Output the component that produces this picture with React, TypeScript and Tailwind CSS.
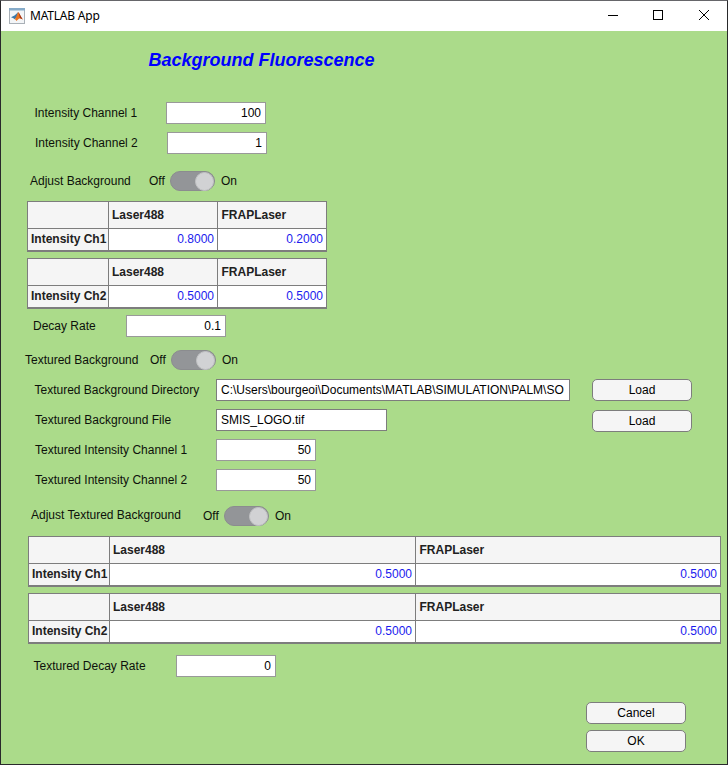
import React from "react";

function Label({ text, className }: { text: string; className: string }) {
  return <span className={`shrink-0 whitespace-nowrap leading-[14px] ${className}`}>{text}</span>;
}

function NumberField({ value, className = "" }: { value: string; className?: string }) {
  return (
    <div className={`flex h-[22px] w-[100px] shrink-0 items-center justify-end border border-[#999999] bg-white pr-1 text-black ${className}`}>
      {value}
    </div>
  );
}

function TextField({ value, className }: { value: string; className: string }) {
  return (
    <div className={`flex h-[22px] shrink-0 items-center border border-[#7d7d7d] bg-white px-1 text-black ${className}`}>
      <span className="whitespace-nowrap">{value}</span>
    </div>
  );
}

function Button({ text, className = "" }: { text: string; className?: string }) {
  return (
    <button className={`flex h-[22px] w-[100px] shrink-0 items-center justify-center rounded-[5px] border border-[#7d7d7d] bg-[#f5f5f5] text-black ${className}`}>
      {text}
    </button>
  );
}

function Switch() {
  return (
    <div className="flex h-5 shrink-0 items-center">
      <span className="w-[21px]">Off</span>
      <div className="flex h-5 w-[45px] items-center justify-end rounded-full border border-[#8b8c8f] bg-[#939598]">
        <div className="size-[19px] rounded-full border border-[#c1c2c4] bg-[#d1d2d4]" />
      </div>
      <span className="pl-[6px]">On</span>
    </div>
  );
}

function Table({ row, values, columns, className }: { row: string; values: string[]; columns: string; className: string }) {
  return (
    <div className={`grid h-[51px] shrink-0 grid-rows-[26px_21px] gap-px border border-b-2 border-[#7d7d7d] bg-[#7d7d7d] ${columns} ${className}`}>
      <div className="bg-[#f5f5f5]" />
      <div className="flex items-center bg-[#f5f5f5] pl-[3px] font-bold text-[#212121]">Laser488</div>
      <div className="flex items-center bg-[#f5f5f5] pl-[3.5px] font-bold text-[#212121]">FRAPLaser</div>
      <div className="flex items-center whitespace-nowrap bg-[#f5f5f5] pb-[2px] pl-[3px] font-bold text-[#212121]">{row}</div>
      <div className="flex items-center justify-end bg-white pr-[3px] pb-[2px] text-[#1a1aee]">{values[0]}</div>
      <div className="flex items-center justify-end bg-white pr-[3px] pb-[2px] text-[#1a1aee]">{values[1]}</div>
    </div>
  );
}

function MatlabIcon() {
  return (
    <svg width="16" height="16" viewBox="0 0 16 16" className="shrink-0">
      <rect x="0.5" y="0.5" width="15" height="15" fill="#f3f5f7" stroke="#a9b0b7" />
      <rect x="0" y="0" width="16" height="2.5" fill="#86abc9" />
      <path d="M2 9.3 5.5 7.6 8 5.3 9.2 4 8.3 8.4 5.6 11.2 4.4 10.3Z" fill="#3b79aa" />
      <path d="M5.6 11.2C7.5 10 8 5.8 9.2 4 10.7 5.4 12 9.2 13.8 11.4 12.2 10.6 11 10 9.8 10.8 8.7 11.6 8.2 12.7 7.4 13 7 12 6.3 11.4 5.6 11.2Z" fill="#ea7420" />
      <path d="M9.2 4C10.7 5.4 12 9.2 13.8 11.4 12.3 10.7 11.6 10.3 10.9 10.3 10.6 8 10.1 5.7 9.2 4Z" fill="#a03218" />
    </svg>
  );
}

function TitleBar() {
  return (
    <div className="flex h-[30px] shrink-0 items-center bg-white pl-2">
      <MatlabIcon />
      <span className="ml-[5px] grow font-['Noto_Sans',sans-serif] text-[12px] tracking-[-0.2px] text-black">MATLAB App</span>
      <svg width="120" height="30" viewBox="0 0 120 30" fill="none" stroke="#000" shapeRendering="crispEdges">
        <path d="M1 14.5H11" />
        <rect x="46.5" y="9.5" width="9" height="9" />
        <path d="M92 9 102 19M102 9 92 19" shapeRendering="auto" />
      </svg>
    </div>
  );
}

export default function App() {
  return (
    <div className="flex h-[765px] w-[728px] flex-col border border-[#29292b] border-t-[#66666a] bg-[#abdb8a] font-['Liberation_Sans',Arial,sans-serif] text-[12px] leading-[14px] text-[#0d110b]">
      <TitleBar />
      <h1 className="mt-[18px] ml-[147.5px] h-[22px] text-[18px] leading-[22px] font-bold whitespace-nowrap text-[#0000ff] italic">
        Background Fluorescence
      </h1>
      <div className="mt-[31px] flex h-[22px] items-center">
        <Label text="Intensity Channel 1" className="w-[165px] pl-[33.5px]" />
        <NumberField value="100" />
      </div>
      <div className="mt-2 flex h-[22px] items-center">
        <Label text="Intensity Channel 2" className="w-[166px] pl-[34px]" />
        <NumberField value="1" />
      </div>
      <div className="mt-[17px] flex h-5 items-center">
        <Label text="Adjust Background" className="w-[148px] pl-[29px]" />
        <Switch />
      </div>
      <Table row="Intensity Ch1" values={["0.8000", "0.2000"]} columns="grid-cols-[80px_108px_108px]" className="mt-[10px] ml-[26px] w-[300px]" />
      <Table row="Intensity Ch2" values={["0.5000", "0.5000"]} columns="grid-cols-[80px_108px_108px]" className="mt-[6px] ml-[26px] w-[300px]" />
      <div className="mt-[6px] flex h-[22px] items-center">
        <Label text="Decay Rate" className="w-[125px] pl-[32px]" />
        <NumberField value="0.1" />
      </div>
      <div className="mt-[13px] flex h-5 items-center">
        <Label text="Textured Background" className="w-[149px] pl-[24px]" />
        <Switch />
      </div>
      <div className="mt-[9px] flex h-[22px] items-center">
        <Label text="Textured Background Directory" className="w-[215px] pl-[33.5px]" />
        <TextField value="C:\Users\bourgeoi\Documents\MATLAB\SIMULATION\PALM\SO" className="w-[354px]" />
        <Button text="Load" className="ml-[22px]" />
      </div>
      <div className="mt-2 flex h-[23px] items-start">
        <Label text="Textured Background File" className="w-[215px] pt-1 pl-[34px]" />
        <TextField value="SMIS_LOGO.tif" className="w-[171px]" />
        <Button text="Load" className="mt-px ml-[205px]" />
      </div>
      <div className="mt-[7px] flex h-[22px] items-center">
        <Label text="Textured Intensity Channel 1" className="w-[215px] pl-[34px]" />
        <NumberField value="50" />
      </div>
      <div className="mt-2 flex h-[22px] items-center">
        <Label text="Textured Intensity Channel 2" className="w-[215px] pl-[34px]" />
        <NumberField value="50" />
      </div>
      <div className="mt-[15px] flex h-5 items-center">
        <Label text="Adjust Textured Background" className="w-[202px] pb-[2px] pl-[30px]" />
        <Switch />
      </div>
      <Table row="Intensity Ch1" values={["0.5000", "0.5000"]} columns="grid-cols-[80px_305px_304px]" className="mt-[10px] ml-[27px] w-[693px]" />
      <Table row="Intensity Ch2" values={["0.5000", "0.5000"]} columns="grid-cols-[80px_305px_304px]" className="mt-[6px] ml-[27px] w-[693px]" />
      <div className="mt-[11px] flex h-[22px] items-center">
        <Label text="Textured Decay Rate" className="w-[175px] pl-[32.5px]" />
        <NumberField value="0" />
      </div>
      <div className="mt-[25px] ml-[585px] flex flex-col gap-[6px]">
        <Button text="Cancel" />
        <Button text="OK" />
      </div>
    </div>
  );
}
